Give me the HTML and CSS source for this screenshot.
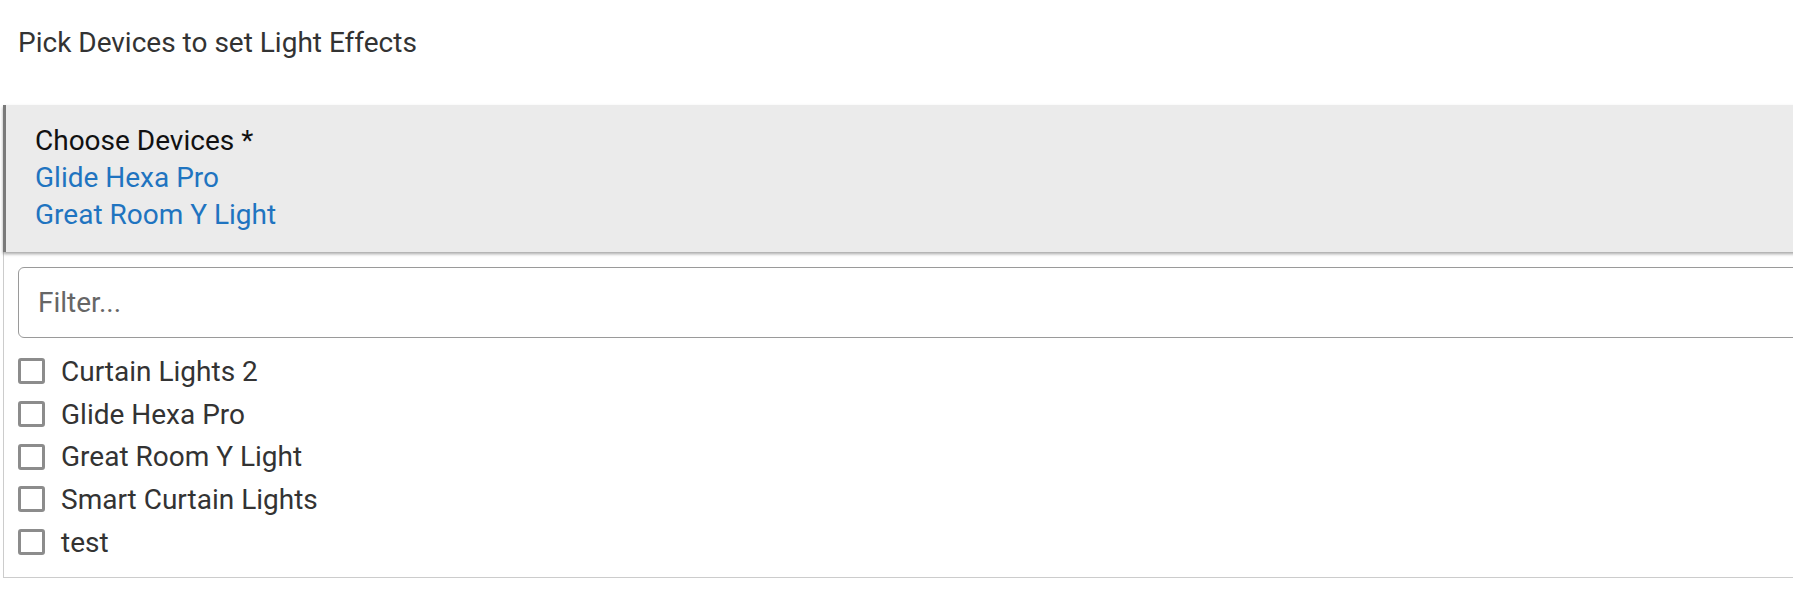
FILE: index.html
```html
<!DOCTYPE html>
<html>
<head>
<meta charset="utf-8">
<link rel="stylesheet" href="styles.css">
</head>
<body>
<div class="page">
  <div class="title">Pick Devices to set Light Effects</div>
  <div class="chooser">
    <div class="chooser-label">Choose Devices *</div>
    <div class="chosen">Glide Hexa Pro</div>
    <div class="chosen">Great Room Y Light</div>
  </div>
  <div class="panel">
    <input class="filter" type="text" placeholder="Filter...">
    <ul class="list">
      <li class="item"><span class="box"></span><span class="name">Curtain Lights 2</span></li>
      <li class="item"><span class="box"></span><span class="name">Glide Hexa Pro</span></li>
      <li class="item"><span class="box"></span><span class="name">Great Room Y Light</span></li>
      <li class="item"><span class="box"></span><span class="name">Smart Curtain Lights</span></li>
      <li class="item"><span class="box"></span><span class="name">test</span></li>
    </ul>
  </div>
</div>
</body>
</html>
```

FILE: styles.css
```css
html {
  overflow: hidden;
}
body {
  margin: 0;
  background: #ffffff;
  font-family: Roboto, "Liberation Sans", sans-serif;
}
.page {
  width: 1900px;
}
.title {
  margin-top: 25px;
  padding-left: 18px;
  font-size: 28px;
  line-height: 36px;
  color: #333333;
}
.chooser {
  margin-top: 44px;
  margin-left: 3px;
  border-left: 3px solid #7a7a7a;
  background: #ebebeb;
  padding: 17px 0 19px 29px;
  font-size: 28px;
  line-height: 37px;
  box-shadow: 0 2px 3px rgba(0, 0, 0, 0.35);
  position: relative;
  z-index: 1;
}
.chooser-label {
  color: #111111;
}
.chosen {
  color: #1f74c0;
}
.panel {
  margin-left: 3px;
  border: 1px solid #cccccc;
  border-top: none;
  padding: 15px 0 14px 14px;
}
.filter {
  display: block;
  box-sizing: border-box;
  width: 100%;
  height: 71px;
  margin: 0;
  border: 1px solid #9a9a9a;
  border-radius: 6px;
  padding: 0 0 0 19px;
  font-family: Roboto, "Liberation Sans", sans-serif;
  font-size: 28px;
  color: #333333;
  background: #ffffff;
  outline: none;
}
.filter::placeholder {
  color: #666666;
}
.list {
  list-style: none;
  margin: 12px 0 0 0;
  padding: 0;
}
.item {
  display: flex;
  align-items: center;
  height: 42.7px;
  font-size: 28px;
  color: #333333;
}
.box {
  box-sizing: border-box;
  width: 27px;
  height: 26px;
  border: 3px solid #8c8c8c;
  border-radius: 3px;
  margin-right: 16px;
  flex: none;
}
```
